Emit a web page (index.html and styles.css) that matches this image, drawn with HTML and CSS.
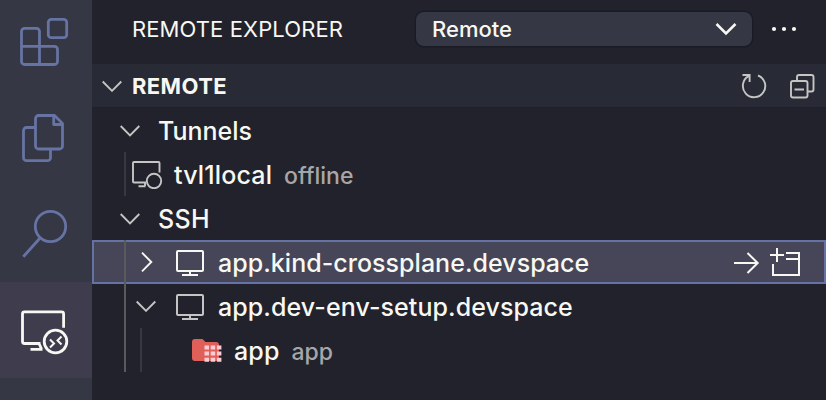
FILE: index.html
```html
<!DOCTYPE html>
<html lang="en">
<head>
<meta charset="utf-8">
<title>Remote Explorer</title>
<link rel="stylesheet" href="styles.css">
</head>
<body>
<div class="app">
  <nav class="activity">
    <div class="activity-item"><svg width="92" height="96" viewBox="0 0 92 96"><g fill="none" stroke="currentColor" stroke-width="2.8"><rect x="48.300" y="25.300" width="18.400" height="18.400" rx="3"/><path d="M21.500 52.300V37.300a3 3 0 0 1 3-3h12a3 3 0 0 1 3 3V70.500M21.500 52.300H54.500a3 3 0 0 1 3 3V67.500a3 3 0 0 1-3 3H24.500a3 3 0 0 1-3-3z"/></g></svg></div>
    <div class="activity-item"><svg width="92" height="96" viewBox="0 0 92 96"><g fill="none" stroke="currentColor" stroke-width="2.800" stroke-linejoin="round"><path d="M35 37.500H26.500a3 3 0 0 0-3 3V67.700a3 3 0 0 0 3 3H47.500a3 3 0 0 0 3-3V59.500M38.500 25.500H54.500L62.500 33.500V56a3 3 0 0 1-3 3H38.500a3 3 0 0 1-3-3V28.500a3 3 0 0 1 3-3zM53.700 26V34.500H62.500"/></g></svg></div>
    <div class="activity-item"><svg width="92" height="96" viewBox="0 0 92 96"><g fill="none" stroke="currentColor" stroke-width="2.800"><circle cx="50.500" cy="40.500" r="15.200"/><path d="M40.300 51.800L23.300 70.800"/></g></svg></div>
    <div class="activity-item active"><svg width="92" height="96" viewBox="0 0 92 96"><g fill="none" stroke="currentColor" stroke-width="2.800"><path d="M63.600 45.800V31.800a2 2 0 0 0-2-2H24.500a2 2 0 0 0-2 2V59.500a2 2 0 0 0 2 2H40.500M30.500 67.300H42.500M39 61.500L41.500 67"/><circle cx="55.500" cy="59.500" r="11.300"/><path stroke-width="2" d="M50 57.500L54 61.500L50 65.500M61.500 54.500L57.500 58.500L61.500 62.500"/></g></svg></div>
  </nav>
  <main class="sidebar">
    <header class="title-bar">
      <h1 class="title">REMOTE EXPLORER</h1>
      <div class="select"><span>Remote</span><svg width="22" height="14" viewBox="0 0 22 14"><path d="M1.500 2L11 11.500L20.500 2" fill="none" stroke="currentColor" stroke-width="2.500"/></svg></div>
      <svg class="more" width="26" height="6" viewBox="0 0 26 6" fill="currentColor"><circle cx="3" cy="3" r="2.100"/><circle cx="13" cy="3" r="2.100"/><circle cx="23" cy="3" r="2.100"/></svg>
    </header>
    <div class="section">
      <svg class="chevron" width="20" height="12" viewBox="0 0 20 12"><path d="M.7 1.500L10 10.800L19.300 1.500"/></svg>
      <h2 class="section-title">REMOTE</h2>
      <div class="section-actions">
        <svg width="26" height="26" viewBox="0 0 26 26" fill="none" stroke="currentColor" stroke-width="1.900"><path d="M17 2.500A11.200 11.200 0 1 1 7.600 3.200L9 2.600M1.500 2H8.600V9"/></svg>
        <svg width="26" height="26" viewBox="0 0 26 26" fill="none" stroke="currentColor" stroke-width="1.900"><rect x="2" y="8" width="16.500" height="16.500" rx="2"/><path d="M8 7.500V4a2 2 0 0 1 2-2H22.500a2 2 0 0 1 2 2V16.500a2 2 0 0 1-2 2H19M5.500 16.500H15"/></svg>
      </div>
    </div>
    <div class="tree">
      <div class="row group">
        <svg class="chevron" width="20" height="14" viewBox="0 0 20 14"><path d="M.7 3L10 12.300L19.300 3"/></svg>
        <span class="label tunnels">Tunnels</span>
      </div>
      <div class="row leaf guided">
        <svg class="icon" width="32" height="30" viewBox="0 -1 32 30" fill="none" stroke="currentColor" stroke-width="1.900"><path d="M27.500 12.500V3a1 1 0 0 0-1-1H2a1 1 0 0 0-1 1V21.500a1 1 0 0 0 1 1H14M6.500 26.200H13.500M13 22.500V26"/><circle cx="22" cy="21" r="7.200"/></svg>
        <span class="label tunnel-name">tvl1local</span><span class="description offline">offline</span>
      </div>
      <div class="row group">
        <svg class="chevron" width="20" height="14" viewBox="0 0 20 14"><path d="M.7 3L10 12.300L19.300 3"/></svg>
        <span class="label ssh">SSH</span>
      </div>
      <div class="row host selected active-guide">
        <span class="twist"><svg class="chevron" width="12" height="20" viewBox="0 0 12 20"><path d="M1 .7L10.300 10L1 19.300"/></svg></span>
        <svg class="icon monitor" width="28" height="28" viewBox="0 -2 28 28" fill="none" stroke="currentColor" stroke-width="2"><rect x="1" y="1" width="26" height="20" rx="1"/><path d="M14 21V25M6 25H22"/></svg>
        <span class="label kind">app.kind-crossplane.devspace</span>
        <div class="row-actions">
          <svg width="26" height="24" viewBox="0 0 26 24" fill="none" stroke="currentColor" stroke-width="2"><path d="M0 13H24M13.500 3L23.700 13L13.500 23"/></svg>
          <svg width="30" height="30" viewBox="0 0 30 30" fill="none" stroke="currentColor" stroke-width="2"><path d="M0 8H14M7 1V15M3 17V28H29V6H16M16 12H29"/></svg>
        </div>
      </div>
      <div class="row host active-guide">
        <span class="twist"><svg class="chevron" width="20" height="12" viewBox="0 0 20 12"><path d="M.7 1.500L10 10.800L19.300 1.500"/></svg></span>
        <svg class="icon monitor" width="28" height="28" viewBox="0 -2 28 28" fill="none" stroke="currentColor" stroke-width="2"><rect x="1" y="1" width="26" height="20" rx="1"/><path d="M14 21V25M6 25H22"/></svg>
        <span class="label dev">app.dev-env-setup.devspace</span>
      </div>
      <div class="row folder active-guide nested-guide">
        <svg width="30" height="26" viewBox="0 -2 30 26"><path fill="#e05f59" d="M3 0H10.500L13.500 3H24a3 3 0 0 1 3 3V19a3 3 0 0 1-3 3H3a3 3 0 0 1-3-3V3a3 3 0 0 1 3-3z"/><g fill="#fbcdd2"><path d="M12.500 6.500h4.500v4h-4.500zM18.700 6.500h4.500v4h-4.500zM24.900 6.500h4.500v4h-4.500zM12.500 12.500h4.500v4h-4.500zM18.700 12.500h4.500v4h-4.500zM24.900 12.500h4.500v4h-4.500zM12.500 18.700h4.500v4h-4.500zM18.700 18.700h4.500v4h-4.500zM24.900 18.700h4.500v4h-4.500z"/></g></svg>
        <span class="label folder-name">app</span><span class="description folder-path">app</span>
      </div>
    </div>
  </main>
</div>
</body>
</html>
```

FILE: styles.css
```css
* { box-sizing: border-box; }
body { margin: 0; background: #22222c; color: #f8f8f2; font-family: Inter, "Liberation Sans", sans-serif; }
svg { display: block; flex: none; }
.app { display: flex; width: 826px; height: 400px; overflow: hidden; }
.activity { width: 92px; height: 400px; flex: none; background: #353744; color: #6673a3; overflow: hidden; }
.activity-item { height: 96px; }
.activity-item:first-child { margin-top: -6px; }
.activity-item.active { background: #3f3c4e; color: #f8f8f2; }
.sidebar { flex: 1; min-width: 0; }
.title-bar { height: 64px; display: flex; align-items: center; padding: 0 28px 6px 40px; }
.title { margin: 0; width: 284px; font-size: 22px; font-weight: 400; line-height: 34px; letter-spacing: .1px; white-space: nowrap; }
.select { width: 336px; height: 34px; border-radius: 8px; background: #353744; box-shadow: 0 0 0 1.500px #1a1b24; display: flex; align-items: center; justify-content: space-between; padding: 0 15px 0 16px; font-size: 22px; font-weight: 450; }
.more { margin-left: 19px; }
.section { height: 44px; background: #282a35; display: flex; align-items: center; padding: 0 11px 0 10px; border-bottom: 1px solid #1f202a; }
.chevron { fill: none; stroke: #c5c5c5; stroke-width: 1.900; }
.section-title { margin: 0 0 0 10px; font-size: 22px; font-weight: 700; letter-spacing: .4px; }
.section-actions { margin-left: auto; display: flex; gap: 22px; color: #c5c5c5; }
.row { position: relative; height: 44px; display: flex; align-items: center; white-space: nowrap; }
.label { font-size: 25px; font-weight: 450; line-height: 42px; padding-top: 2px; letter-spacing: .15px; }
.tunnels { letter-spacing: 0; }
.ssh { letter-spacing: .4px; }
.kind { letter-spacing: .03px; }
.dev { letter-spacing: .08px; }
.description { font-size: 23px; font-weight: 450; color: #a7a7a8; line-height: 40px; padding-top: 4px; }
.group { padding-left: 28px; }
.group .label { margin-left: 18px; }
.leaf { padding-left: 40px; }
.leaf .label { margin-left: 10px; }
.leaf .description { margin-left: 12px; }
.icon { color: #c5c5c5; }
.guided::before, .active-guide::before, .nested-guide::after { content: ""; position: absolute; left: 32px; top: 0; width: 2px; height: 44px; background: #383842; }
.active-guide::before { background: #595a5c; }
.nested-guide::after { left: 48px; }
.twist { width: 20px; display: flex; justify-content: center; }
.host { padding: 0 26px 0 44px; }
.host .monitor { margin-left: 20px; }
.host .label { margin-left: 14px; }
.selected { background: #464658; box-shadow: inset 0 0 0 2px #6573a4; }
.selected .icon { color: #f8f8f2; }
.selected .chevron { stroke: #f8f8f2; margin-left: 2px; }
.row-actions { margin-left: auto; display: flex; align-items: center; gap: 10px; }
.folder { padding-left: 100px; }
.folder .label { margin-left: 12px; }
.folder .description { margin-left: 12px; }
```
